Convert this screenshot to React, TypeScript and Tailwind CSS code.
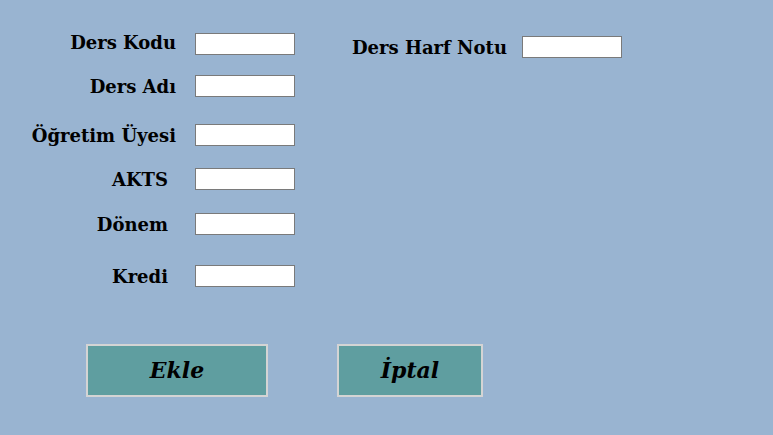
import React from "react";

const font = { fontFamily: '"DejaVu Serif", Georgia, serif' };

function Row({ label, mt, pr, dy }: { label: string; mt: string; pr: string; dy: string }) {
  return (
    <div className={`flex items-center h-[22px] ${mt}`}>
      <div className={`w-[176px] text-right text-[18px] font-bold text-black whitespace-nowrap ${pr} ${dy}`}>{label}</div>
      <div className="ml-[19px] w-[100px] h-[22px] border border-[#7a7a7a] bg-white" />
    </div>
  );
}

export default function App() {
  return (
    <div className="w-[773px] h-[435px] bg-[#99b4d1] overflow-hidden" style={font}>
      <div className="flex pt-[33px]">
        <div className="flex flex-col">
          <Row label="Ders Kodu" mt="mt-0" pr="pr-0" dy="-translate-y-[2px]" />
          <Row label="Ders Adı" mt="mt-[20px]" pr="pr-0" dy="translate-y-0" />
          <Row label="Öğretim Üyesi" mt="mt-[27px]" pr="pr-0" dy="translate-y-0" />
          <Row label="AKTS" mt="mt-[22px]" pr="pr-[8px]" dy="translate-y-0" />
          <Row label="Dönem" mt="mt-[23px]" pr="pr-[8px]" dy="translate-y-0" />
          <Row label="Kredi" mt="mt-[30px]" pr="pr-[8px]" dy="translate-y-0" />
        </div>
        <div className="flex items-center h-[22px] mt-[3px] ml-[57px]">
          <div className="w-[170px] text-[18px] font-bold text-black whitespace-nowrap">Ders Harf Notu</div>
          <div className="w-[100px] h-[22px] border border-[#7a7a7a] bg-white" />
        </div>
      </div>
      <div className="flex mt-[57px] pl-[86px] gap-[69px]">
        <div className="w-[182px] h-[53px] border-2 border-[#d4d4d4] bg-[#5f9ea0] flex items-center justify-center text-[22px] font-bold italic text-black">
          Ekle
        </div>
        <div className="w-[146px] h-[53px] border-2 border-[#d4d4d4] bg-[#5f9ea0] flex items-center justify-center text-[22px] font-bold italic text-black">
          İptal
        </div>
      </div>
    </div>
  );
}
